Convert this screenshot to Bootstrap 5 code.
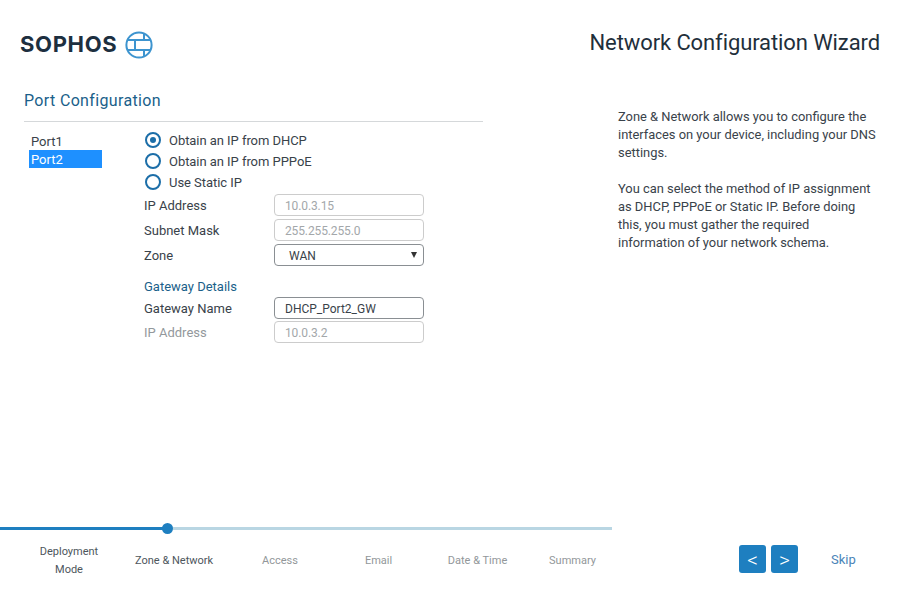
<!DOCTYPE html>
<html lang="en"><head><meta charset="utf-8"><title>Network Configuration Wizard</title>
<link href="https://cdn.jsdelivr.net/npm/bootstrap@5.3.0/dist/css/bootstrap.min.css" rel="stylesheet">
<style>
html,body{height:592px;overflow:hidden}
body{font-family:Roboto,"Liberation Sans",sans-serif;font-size:13px;color:#39424a;background:#fff;width:912px}
.shell{height:592px}
.top-bar{height:89px;padding:0 32px 0 20px}
.brand{font:700 22px/1 Inter,sans-serif;color:#1d2f3f;letter-spacing:.65px;margin-bottom:2px}
.wiz-title{font-size:22px;font-weight:400;color:#1f2f3b;letter-spacing:-.1px;margin:0 0 2px}
.mid{height:438px;padding-left:24px}
.left-pane{width:459px}
.sec-title{font-size:16px;font-weight:400;color:#1b5f8a;letter-spacing:.35px;line-height:24px;padding-bottom:8px;border-bottom:1px solid #d5d8da;margin:0 0 7px}
.ports{width:73px;margin:3px 0 0 5px;padding:0;list-style:none;line-height:20px}
.ports li{padding-left:2px;height:18px}
.ports .sel{background:#1e90ff;color:#fff}
.form-pane{margin-left:42px;width:280px}
.radio-row{height:21px;align-items:center;gap:8px;letter-spacing:-.05px}
.rtxt{padding-top:2px}
.rad{width:16px;height:16px;border:2px solid #1c6ea8;border-radius:50%;margin-left:1px;flex:none;display:flex;align-items:center;justify-content:center}
.rad i{width:6px;height:6px;border-radius:50%;background:#1c6ea8;display:block}
.field-row{height:25px;align-items:center}
.field-row.tight{height:24px}
.field-row label{width:130px;flex:none;padding-top:2px}
.fbox{width:150px;height:22px;border:1px solid #ccc;border-radius:4px;padding:1px 10px 0;font-size:12px;line-height:20px;color:#a3a7aa;background:#fff;letter-spacing:-.12px}
.fbox.on{border-color:#8a8f93;color:#39424a;letter-spacing:0}
.fbox.pick{padding-left:14px;position:relative}
.fbox.pick::after{content:"";position:absolute;right:6px;top:7px;border-left:3.5px solid transparent;border-right:3.5px solid transparent;border-top:6px solid #333}
.gw-head{color:#1b5f8a;margin:11px 0 0;line-height:18px;height:17px}
.muted-lbl{color:#93989c}
.help{width:260px;margin:19px 0 0 135px;line-height:18px;font-size:12.9px;color:#39424a}
.help p{margin:0 0 18px}
.foot{height:65px}
.track{width:612px;height:3px;background:#b9d6e3;position:relative}
.track .fill{height:3px;background:#1e7fc0}
.track .knob{position:absolute;left:162px;top:-4px;width:11px;height:11px;border-radius:50%;background:#1e7fc0}
.steps{width:612px;height:62px;font-size:11px}
.steps div{text-align:center;line-height:18px;white-space:nowrap}
.s-done{color:#4d565c}
.s-off{color:#92979a}
.step-first{width:135px;padding-left:3px}
.step-second{width:78px}
.step-third{width:137px;padding-right:3px}
.step-fourth{width:57px}
.step-fifth{width:141px}
.step-sixth{width:49px}
.right-foot{margin:15px 0 0 127px;height:40px;gap:5px}
.step-btn{width:27px;height:28px;padding:3px 0 0;background:#1e7fc0;border:0;border-radius:3px;color:#fff;font-size:21px;font-weight:300;line-height:25px}
.skip{color:#4a84b8;text-decoration:none;font-size:13px;margin-left:28px;margin-top:5px}
</style></head>
<body>
<div class="shell d-flex flex-column">
 <header class="top-bar d-flex justify-content-between align-items-center">
  <div class="d-flex align-items-center gap-2">
   <span class="brand">SOPHOS</span>
   <svg width="28" height="28" viewBox="0 0 28 28" fill="none" stroke="#3d94cf" stroke-width="2" aria-hidden="true"><circle cx="14" cy="14" r="12.6"/><path d="M3 9H25M3 19H25M10 9V19M19 2V9M19 19V26"/></svg>
  </div>
  <h1 class="wiz-title">Network Configuration Wizard</h1>
 </header>
 <main class="mid d-flex">
  <section class="left-pane">
   <h2 class="sec-title">Port Configuration</h2>
   <div class="d-flex">
    <ul class="ports"><li>Port1</li><li class="sel">Port2</li></ul>
    <div class="form-pane">
     <div class="d-flex radio-row"><span class="rad"><i></i></span><span class="rtxt">Obtain an IP from DHCP</span></div>
     <div class="d-flex radio-row"><span class="rad"></span><span class="rtxt">Obtain an IP from PPPoE</span></div>
     <div class="d-flex radio-row"><span class="rad"></span><span class="rtxt">Use Static IP</span></div>
     <div class="d-flex field-row"><label>IP Address</label><div class="fbox">10.0.3.15</div></div>
     <div class="d-flex field-row"><label>Subnet Mask</label><div class="fbox">255.255.255.0</div></div>
     <div class="d-flex field-row"><label>Zone</label><div class="fbox on pick">WAN</div></div>
     <div class="gw-head">Gateway Details</div>
     <div class="d-flex field-row"><label>Gateway Name</label><div class="fbox on">DHCP_Port2_GW</div></div>
     <div class="d-flex field-row tight"><label class="muted-lbl">IP Address</label><div class="fbox">10.0.3.2</div></div>
    </div>
   </div>
  </section>
  <aside class="help">
   <p>Zone &amp; Network allows you to configure the interfaces on your device, including your DNS settings.</p>
   <p>You can select the method of IP assignment as DHCP, PPPoE or Static IP. Before doing this, you must gather the required information of your network schema.</p>
  </aside>
 </main>
 <footer class="foot">
  <div class="track"><div class="fill" style="width:168px"></div><span class="knob"></span></div>
  <div class="d-flex">
   <div class="steps d-flex align-items-center">
    <div class="s-done step-first">Deployment<br>Mode</div>
    <div class="s-done step-second">Zone &amp; Network</div>
    <div class="s-off step-third">Access</div>
    <div class="s-off step-fourth">Email</div>
    <div class="s-off step-fifth">Date &amp; Time</div>
    <div class="s-off step-sixth">Summary</div>
   </div>
   <div class="right-foot d-flex align-items-start">
    <button class="step-btn" type="button">&lt;</button>
    <button class="step-btn" type="button">&gt;</button>
    <a class="skip" href="#">Skip</a>
   </div>
  </div>
 </footer>
</div>
<script src="https://cdn.jsdelivr.net/npm/bootstrap@5.3.0/dist/js/bootstrap.bundle.min.js"></script>
</body></html>
